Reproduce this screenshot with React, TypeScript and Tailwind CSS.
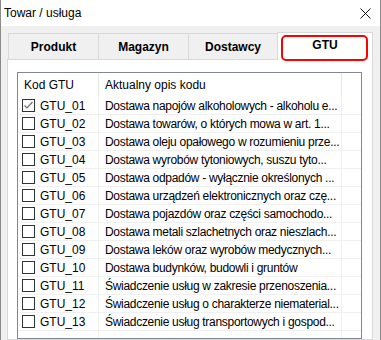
import React from 'react';

const rows = [
  { code: 'GTU_01', desc: 'Dostawa napojów alkoholowych - alkoholu e...', checked: true },
  { code: 'GTU_02', desc: 'Dostawa towarów, o których mowa w art. 1...' },
  { code: 'GTU_03', desc: 'Dostawa oleju opałowego w rozumieniu prze...' },
  { code: 'GTU_04', desc: 'Dostawa wyrobów tytoniowych, suszu tyto...' },
  { code: 'GTU_05', desc: 'Dostawa odpadów - wyłącznie określonych ...' },
  { code: 'GTU_06', desc: 'Dostawa urządzeń elektronicznych oraz czę...' },
  { code: 'GTU_07', desc: 'Dostawa pojazdów oraz części samochodo...' },
  { code: 'GTU_08', desc: 'Dostawa metali szlachetnych oraz nieszlach...' },
  { code: 'GTU_09', desc: 'Dostawa leków oraz wyrobów medycznych...' },
  { code: 'GTU_10', desc: 'Dostawa budynków, budowli i gruntów' },
  { code: 'GTU_11', desc: 'Świadczenie usług w zakresie przenoszenia...' },
  { code: 'GTU_12', desc: 'Świadczenie usług o charakterze niematerial...' },
  { code: 'GTU_13', desc: 'Świadczenie usług transportowych i gospod...' },
];

const tabs = ['Produkt', 'Magazyn', 'Dostawcy'];

const Checkbox = ({ checked }: { checked?: boolean }) => (
  <div className="w-[13px] h-[13px] border border-[#333333] bg-white flex items-center justify-center shrink-0">
    {checked && (
      <svg width="11" height="11" viewBox="0 0 11 11">
        <polyline points="1.5,5.5 4,8 9.5,2" fill="none" stroke="#6e6e6e" strokeWidth="1.2" />
      </svg>
    )}
  </div>
);

export default function App() {
  return (
    <div className="w-[381px] h-[340px] overflow-hidden bg-[#f0f0f0] border-x border-[#8a8a8a] flex flex-col font-['Liberation_Sans',Arial,sans-serif] text-[12px] text-black">
      {/* pasek tytułu */}
      <div className="h-[26px] bg-white flex items-center justify-between pl-[3px] pr-[9px] shrink-0">
        <span>Towar / usługa</span>
        <svg width="11" height="11" viewBox="0 0 11 11">
          <path d="M0.5 0.5 L10.5 10.5 M10.5 0.5 L0.5 10.5" stroke="#111" strokeWidth="1" />
        </svg>
      </div>

      {/* zakładki */}
      <div className="flex items-end ml-[7px] mt-[5px] h-[28px] relative z-10 shrink-0">
        {tabs.map((t, i) => (
          <div
            key={t}
            className={`h-[26px] ${i === 2 ? 'w-[90px] border-r' : 'w-[90px]'} border-l border-t border-[#d9d9d9] flex items-center justify-center font-bold`}
          >
            {t}
          </div>
        ))}
        <div className="relative h-[28px] w-[96px] ml-[-1px] mb-[-1px] bg-white border-x border-t border-[#d9d9d9] flex items-center justify-center font-bold pb-[3px]">
          GTU
          <div className="absolute left-[3px] top-[2px] w-[87px] h-[26px] border-2 border-[#ff0000] rounded-[5px]" />
        </div>
      </div>

      {/* panel */}
      <div className="ml-[6px] w-[366px] flex-1 bg-white border border-[#d9d9d9] pl-[9px] pr-[10px] pt-[12px] flex flex-col min-h-0">
        <div className="flex-1 border border-[#828790] flex flex-col min-h-0">
          <div className="h-[24px] flex shrink-0">
            <div className="w-[81px] border-r border-[#e5e5e5] pl-[6px] flex items-center">Kod GTU</div>
            <div className="w-[243px] border-r border-[#e5e5e5] pl-[6px] flex items-center">Aktualny opis kodu</div>
            <div className="flex-1" />
          </div>
          {rows.map((r) => (
            <div key={r.code} className="h-[18px] flex border-b border-[#f0f0f0] shrink-0">
              <div className="w-[81px] border-r border-[#f0f0f0] pl-[4px] flex items-center gap-[5px]">
                <Checkbox checked={r.checked} />
                <span>{r.code}</span>
              </div>
              <div className="w-[243px] border-r border-[#f0f0f0] pl-[6px] flex items-center whitespace-nowrap overflow-hidden tracking-[-0.3px]">
                {r.desc}
              </div>
              <div className="flex-1" />
            </div>
          ))}
          <div className="flex-1 flex">
            <div className="w-[81px] border-r border-[#f0f0f0]" />
            <div className="w-[243px] border-r border-[#f0f0f0]" />
            <div className="flex-1" />
          </div>
        </div>
      </div>
    </div>
  );
}
